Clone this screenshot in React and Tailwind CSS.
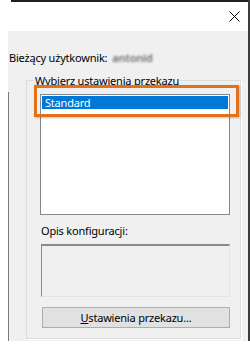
export default function App() {
  return (
    <div className="w-[250px] h-[354px] bg-white overflow-hidden font-['Noto_Sans',sans-serif] text-[11px] tracking-[-0.2px] leading-[15px] text-black">
      <div className="ml-[8px] w-[242px] h-[341px] border-r-2 border-[#3b3b3b] flex flex-col">
        {/* window top edge */}
        <div className="ml-[3px] h-[2px] bg-[#1f1f1f]" />

        {/* title bar */}
        <div className="h-[29px] flex items-center justify-end pr-[8px]">
          <svg width="11" height="11" viewBox="0 0 11 11">
            <path d="M0.5 0.5 L10.5 10.5 M10.5 0.5 L0.5 10.5" stroke="#000" strokeWidth="1" fill="none" />
          </svg>
        </div>

        {/* body */}
        <div className="flex-1 bg-[#f0f0f0] flex">
          <div className="w-px mt-[61px] bg-[#7a7a7a]" />
          <div className="flex-1 flex flex-col">
            <div className="mt-[19px] flex items-center">
              <span>Bieżący użytkownik:</span>
              <span className="ml-[5px] text-[#6e6e6e] font-semibold blur-[1px]">antonid</span>
            </div>

            {/* group box */}
            <div className="relative mt-[15px] ml-[17px] w-[215px] h-[259px] border border-[#dcdcdc] shadow-[1px_1px_0_#fff] flex flex-col">
              <span className="absolute left-[7px] -top-[8px] px-[1px] bg-[#f0f0f0]">
                Wybierz ustawienia przekazu
              </span>

              <div className="mt-[13px] ml-[13px] w-[190px] h-[121px] border border-[#828790] bg-white p-px">
                <div className="h-[13px] bg-[#0078d7] text-white pl-[3px] leading-[13px]">Standard</div>
              </div>

              <div className="mt-[8px] ml-[14px]">Opis konfiguracji:</div>

              <div className="mt-[6px] ml-[14px] w-[189px] h-[53px] border-t-2 border-l border-t-[#8a8a8a] border-l-[#8a8a8a] border-r border-b border-r-[#e3e3e3] border-b-[#e3e3e3] bg-[#f0f0f0]" />

              <button className="mt-[10px] ml-[15px] w-[188px] h-[21px] border border-[#adadad] bg-[#e1e1e1] flex items-center justify-center">
                <span><span className="underline">U</span>stawienia przekazu...</span>
              </button>

              {/* orange highlight */}
              <div className="absolute left-[7px] top-[4px] w-[205px] h-[32px] border-[3px] border-[#e3701a] shadow-[1px_1px_2px_rgba(0,0,0,0.25)]" />
            </div>
          </div>
        </div>
      </div>
    </div>
  );
}
